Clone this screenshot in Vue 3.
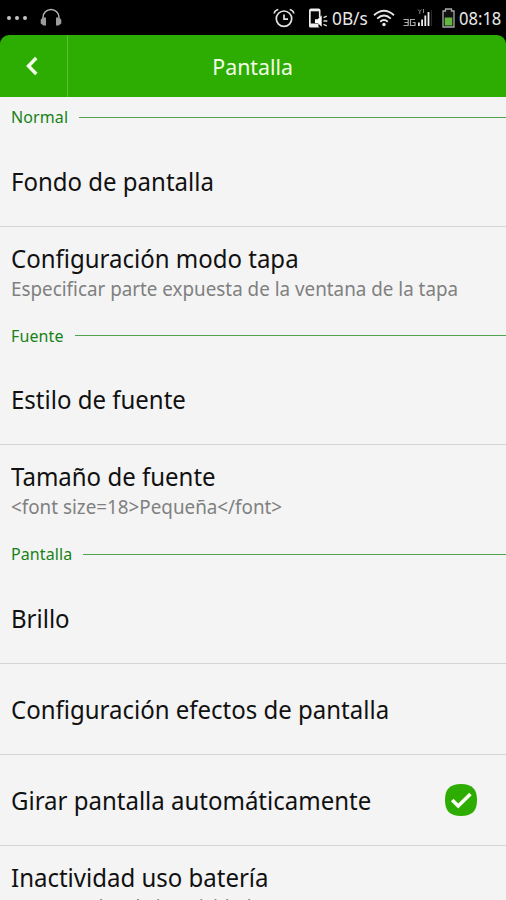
<script setup>
const sections = [
  { name: 'Normal', rows: [
    { title: 'Fondo de pantalla' },
    { title: 'Configuración modo tapa', note: 'Especificar parte expuesta de la ventana de la tapa' },
  ] },
  { name: 'Fuente', rows: [
    { title: 'Estilo de fuente' },
    { title: 'Tamaño de fuente', note: '<font size=18>Pequeña</font>' },
  ] },
  { name: 'Pantalla', rows: [
    { title: 'Brillo' },
    { title: 'Configuración efectos de pantalla' },
    { title: 'Girar pantalla automáticamente', checked: true },
    { title: 'Inactividad uso batería', note: '30 segundos de inactividad' },
  ] },
]
</script>

<template>
  <main class="screen">
    <div class="status">
      <svg class="dots" width="22" height="6" viewBox="0 0 22 6" fill="#c4c4c4"><circle cx="3" cy="3" r="2" /><circle cx="11" cy="3" r="2" /><circle cx="19" cy="3" r="2" /></svg>
      <svg class="phones" width="22" height="19" viewBox="0 0 22 19">
        <path d="M3 11V9.500a8 8 0 0 1 16 0V11" fill="none" stroke="#b5b5b5" stroke-width="1.500" />
        <path d="M6 9.500v8H3.500L.7 15.500v-4L3.500 9.500zM16 9.500v8h2.500l2.800-2v-4l-2.800-2z" fill="#9c9c9c" />
      </svg>
      <span class="grow"></span>
      <svg class="alarm" width="22" height="20" viewBox="0 0 22 20" fill="none" stroke="#e2e2e2" stroke-width="1.700">
        <circle cx="11" cy="10.700" r="7.700" /><path d="M11 6.500v4.700h4M1.300 5.500q.2-3.200 4-4M20.700 5.500q-.2-3.200-4-4" />
      </svg>
      <svg class="mute" width="19" height="20" viewBox="0 0 19 20">
        <path d="M0 2.500Q0 .5 2 .5h7.500q2 0 2 2V18q0 1.500-1.500 1.500H1.500Q0 19.500 0 18z" fill="#eee" />
        <path d="M1.700 3.300h8.200v12.200H1.700z" fill="#050505" />
        <path d="M9.500 9.500h2.500v10H9.500z" fill="#000" />
        <path d="M6 11.300h2.700l4-4v11.500l-4-3.800H6z" fill="#fff" />
        <path d="M14.500 9.700l3.300-1.500M14.500 13h3.800M14.500 16.300l3.300 1.500" stroke="#ddd" stroke-width="1.400" />
      </svg>
      <span class="rate"><span>0B/s</span></span>
      <svg class="wifi" width="22" height="18" viewBox="0 0 22 18" fill="none" stroke="#e6e6e6" stroke-width="1.900">
        <path d="M1 6.200q10-9 20 0M4.200 9.600q6.800-6 13.600 0M7.200 12.700q3.800-3.200 7.600 0" /><circle cx="11" cy="15.500" r="1.700" fill="#eee" stroke="none" />
      </svg>
      <svg class="signal" width="30" height="20" viewBox="0 0 30 20">
        <path d="M.5 11.500h4.700v6H.5M1.500 14.500h3.700M12 11.500H7.500v6H12v-3H9.700" fill="none" stroke="#aaa" stroke-width="1.200" />
        <path d="M15 14.500h1.800v3.500H15zM18.200 11.500H20V18h-1.800zM21.400 7.500h1.800V18h-1.800zM24.600 4h1.800V18h-1.800z" fill="#eee" />
        <path d="M27.800 2h1.200v16h-1.200z" fill="#292929" /><path d="M15 1.500l1.800 2 1.800-2M16.800 3.500v2.500M20.500 1v4" fill="none" stroke="#888" />
      </svg>
      <svg class="battery" width="13" height="20" viewBox="0 0 13 20">
        <path d="M1 3h2.500V1h6v2H12v16H1z" fill="#111" stroke="#aaa" stroke-width="1.300" /><path d="M2.700 9.500h7.600v8H2.700z" fill="#63b63f" />
      </svg>
      <span class="clock"><span>08:18</span></span>
    </div>
    <header class="bar">
      <div class="back">
        <svg width="14" height="20" viewBox="0 0 14 20" fill="none" stroke="#f4ffe9" stroke-width="3.400"><path d="M11.300 2L3.500 10l7.800 8" /></svg>
      </div>
      <h1><span>Pantalla</span></h1>
    </header>
    <section v-for="s in sections" :key="s.name">
      <h2><span>{{ s.name }}</span><i></i></h2>
      <div v-for="r in s.rows" :key="r.title" class="row" :class="{ noted: r.note }">
        <div class="copy">
          <p class="title">{{ r.title }}</p>
          <p v-if="r.note" class="note">{{ r.note }}</p>
        </div>
        <svg v-if="r.checked" class="check" width="32" height="32" viewBox="0 0 32 32">
          <path d="M16 0C27 0 32 5 32 16s-5 16-16 16S0 27 0 16 5 0 16 0z" fill="#2dad02" />
          <path d="M7.200 16l6 6L25.500 10" fill="none" stroke="#fbfff5" stroke-width="3.600" />
        </svg>
      </div>
    </section>
  </main>
</template>

<style>
body { margin: 0; background: #000; }
</style>

<style scoped>
.screen { width: 506px; height: 900px; overflow: hidden; background: #000; font-family: "Noto Sans", sans-serif; }
.status { height: 35px; display: flex; align-items: center; box-sizing: border-box; color: #e8e8e8; }
.status svg { flex: none; }
.dots { margin-left: 6px; }
.phones { margin-left: 12px; }
.grow { flex: 1; }
.alarm { margin-right: 14px; }
.mute { margin-right: 4px; }
.rate { width: 37px; margin-right: 4px; font-size: 18px; white-space: nowrap; }
.rate span, .clock span { display: inline-block; transform-origin: 0 50%; transform: scaleX(.92); }
.rate span { transform: scaleX(.96); }
.wifi { margin-right: 8px; }
.signal { margin-right: 9px; }
.battery { margin-right: 4px; }
.clock { width: 47px; font-size: 18px; white-space: nowrap; }
.bar { height: 62px; display: flex; align-items: center; background: #2dad02; border-radius: 9px 9px 0 0; box-sizing: border-box; padding-bottom: 1px; }
.back { width: 68px; height: 62px; display: flex; align-items: center; justify-content: center; border-right: 1px solid #59be3c; box-sizing: border-box; padding-right: 3px; }
h1 { margin: 1px 68px 0 0; flex: 1; text-align: center; color: #f4ffe9; font-size: 22px; line-height: 30px; font-weight: 400; }
h1 span { display: inline-block; transform: scaleX(.97); }
section { background: #f4f4f4; }
h2 { margin: 0; height: 38px; padding: 2px 0 0 11px; display: flex; align-items: center; gap: 11px; font-size: 16px; line-height: 24px; font-weight: 400; color: #178217; box-sizing: border-box; }
h2 span { letter-spacing: .1px; }
h2 i { flex: 1; height: 1px; background: #51a351; }
.row { height: 91px; display: flex; align-items: center; justify-content: space-between; padding: 1px 29px 0 11px; box-sizing: border-box; }
.row:first-of-type { height: 90.600px; }
.row.noted { height: 90px; padding-top: 0; }
.row + .row { border-top: 1px solid #d5d5d5; }
.copy { white-space: nowrap; }
p { margin: 0; }
.title { color: #111; font-size: 25px; line-height: 34px; transform-origin: 0 50%; transform: scaleX(.96); }
.note { margin-top: 1px; color: #808080; font-size: 19.500px; line-height: 26px; transform-origin: 0 50%; transform: scaleX(.965); }
section:last-child .note { margin: 0 0 1px; }
</style>
